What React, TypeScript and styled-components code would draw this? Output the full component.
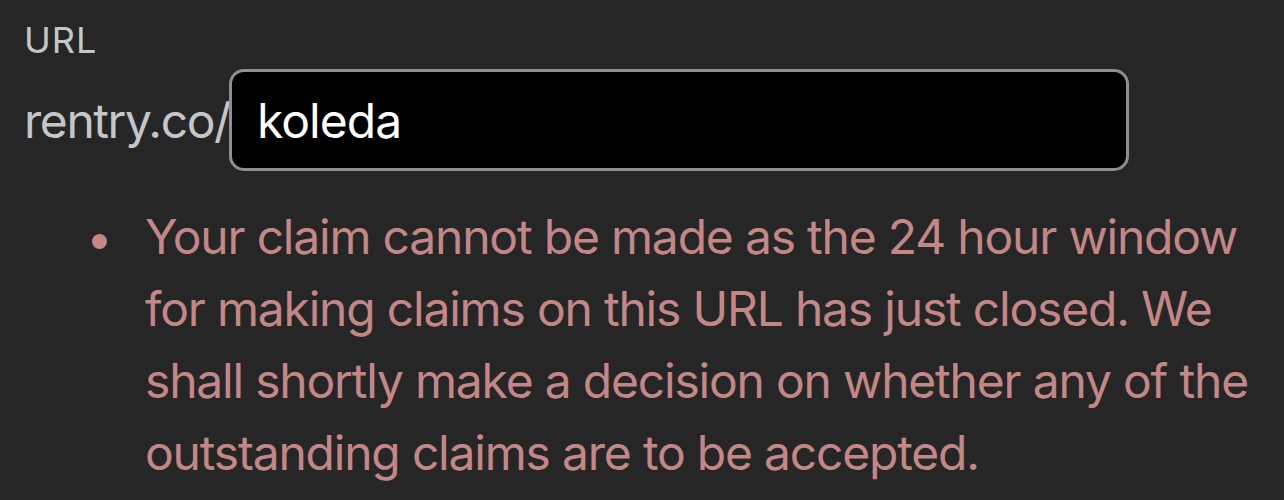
import React from "react";
import styled, { createGlobalStyle } from "styled-components";

const Global = createGlobalStyle`
  html, body { margin: 0; padding: 0; background: #262626; }
  body { font-family: Inter, "Noto Sans", sans-serif; }
`;

const Page = styled.div`
  width: 1284px;
  height: 500px;
  box-sizing: border-box;
  padding: 19px 26px 0 24px;
  background: #262626;
  overflow: hidden;
`;

const Label = styled.div`
  font-size: 36px;
  line-height: 43px;
  letter-spacing: 0.03em;
  color: #c4c6ca;
  margin-bottom: 7px;
`;

const UrlRow = styled.div`
  display: flex;
  align-items: center;
`;

const Prefix = styled.span`
  font-size: 48px;
  letter-spacing: -0.03em;
  color: #c4c6ca;
  line-height: 1;
  padding-top: 2px;
`;

const Input = styled.input`
  box-sizing: border-box;
  width: 900px;
  height: 102px;
  margin-left: -1px;
  background: #000;
  border: 3px solid #8e8e93;
  border-radius: 15px;
  color: #fff;
  font-family: Inter, "Noto Sans", sans-serif;
  font-size: 48px;
  letter-spacing: -0.02em;
  padding: 0 0 0 25px;
  outline: none;
`;

const Notices = styled.ul`
  list-style: none;
  margin: 30px 0 0;
  padding: 0;
`;

const Notice = styled.li`
  display: flex;
  align-items: flex-start;
  font-size: 48px;
  line-height: 72px;
  letter-spacing: -0.025em;
  color: #c28786;
`;

const Dot = styled.span`
  flex: none;
  width: 15px;
  height: 15px;
  border-radius: 50%;
  background: #c28786;
  margin: 33px 38px 0 68px;
`;

const NoticeText = styled.span`
  flex: 1;
`;

export default function App() {
  return (
    <>
      <Global />
      <Page>
        <Label>URL</Label>
        <UrlRow>
          <Prefix>rentry.co/</Prefix>
          <Input defaultValue="koleda" />
        </UrlRow>
        <Notices>
          <Notice>
            <Dot />
            <NoticeText>
              Your claim cannot be made as the 24 hour window for making claims
              on this URL has just closed. We shall shortly make a decision on
              whether any of the outstanding claims are to be accepted.
            </NoticeText>
          </Notice>
        </Notices>
      </Page>
    </>
  );
}
